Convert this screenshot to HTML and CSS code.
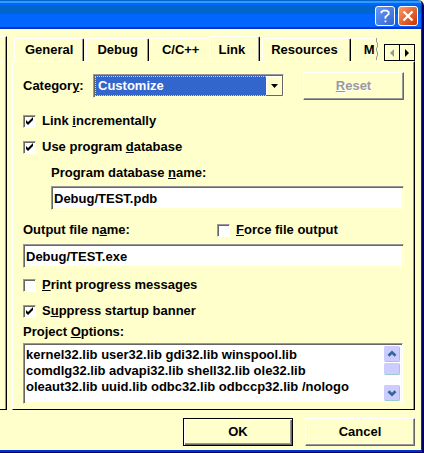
FILE: index.html
```html
<!DOCTYPE html>
<html lang="en">
<head>
<meta charset="utf-8">
<title>Project Settings</title>
<link rel="stylesheet" href="styles.css">
</head>
<body>
<div class="window">
  <header class="titlebar">
    <button class="caption help" type="button" aria-label="Help">
      <svg width="20" height="20" viewBox="0 0 20 20"><path d="M6 7V5.500L8 4h4l2 1.500V8l-3.500 3v2M10.500 15v2" fill="none" stroke="#fff" stroke-width="2"/></svg>
    </button>
    <button class="caption close" type="button" aria-label="Close">
      <svg width="20" height="20" viewBox="0 0 20 20"><path d="M5 5l10 10M15 5L5 15" fill="none" stroke="#fff" stroke-width="2.500"/></svg>
    </button>
  </header>
  <div class="content">
    <div class="side"><div class="side-inner"></div></div>
    <main class="sheet">
      <div class="tabstrip">
        <div class="tabs" role="tablist">
          <button class="tab" type="button" role="tab">General</button>
          <button class="tab" type="button" role="tab">Debug</button>
          <button class="tab last" type="button" role="tab">C/C++</button>
          <button class="tab active" type="button" role="tab" aria-selected="true">Link</button>
          <button class="tab after" type="button" role="tab">Resources</button>
          <button class="tab cut" type="button" role="tab">M</button>
          <svg class="tear" width="5" height="24" viewBox="0 0 5 24"><path d="M1.500 1v4l1 1v4l-1 1v3l1 1v4l-1 1v3" fill="none" stroke="#999"/></svg>
        </div>
        <div class="spinner">
          <button type="button" aria-label="Scroll tabs left"><svg width="14" height="14" viewBox="0 0 14 14"><path d="M9 3v8L5 7z" fill="#999"/></svg></button>
          <button type="button" aria-label="Scroll tabs right"><svg width="14" height="14" viewBox="0 0 14 14"><path d="M5 3v8l4-4z" fill="#000"/></svg></button>
        </div>
      </div>
      <form class="page">
        <div class="row category">
          <label for="category">Categor<u>y</u>:</label>
          <div class="combo">
            <select id="category"><option>Customize</option></select>
            <svg class="drop" width="17" height="20" viewBox="0 0 17 20"><path d="M0 0h17v20H0z" fill="#ffc"/><path d="M.5 20V.5H17" fill="none" stroke="#fff"/><path d="M16.500 0v19.500H0" fill="none" stroke="#666"/><path d="M5 8h7L8.500 12z" fill="#000"/></svg>
          </div>
          <button class="button reset" type="button" disabled><u>R</u>eset</button>
        </div>
        <div class="checks">
          <label class="check"><input type="checkbox" checked><span>Link <u>i</u>ncrementally</span></label>
          <label class="check"><input type="checkbox" checked><span>Use program <u>d</u>atabase</span></label>
        </div>
        <div class="indent">
          <label class="caption-row" for="pdb">Program database <u>n</u>ame:</label>
          <input class="field" id="pdb" type="text" value="Debug/TEST.pdb">
        </div>
        <div class="row output">
          <label for="exe">Output file n<u>a</u>me:</label>
          <label class="check force"><input type="checkbox"><span><u>F</u>orce file output</span></label>
        </div>
        <input class="field" id="exe" type="text" value="Debug/TEST.exe">
        <div class="checks lower">
          <label class="check"><input type="checkbox"><span><u>P</u>rint progress messages</span></label>
          <label class="check"><input type="checkbox" checked><span>S<u>u</u>ppress startup banner</span></label>
        </div>
        <label class="options-label" for="options">Project <u>O</u>ptions:</label>
        <div class="memo">
          <textarea id="options" spellcheck="false">kernel32.lib user32.lib gdi32.lib winspool.lib
comdlg32.lib advapi32.lib shell32.lib ole32.lib
oleaut32.lib uuid.lib odbc32.lib odbccp32.lib /nologo</textarea>
          <div class="scrollbar">
            <button type="button" aria-label="Scroll up"><svg width="16" height="16" viewBox="0 0 16 16"><path d="M4 10l4-4 4 4" fill="none" stroke="#369" stroke-width="3"/></svg></button>
            <div class="thumb"></div>
            <button class="down" type="button" aria-label="Scroll down"><svg width="16" height="16" viewBox="0 0 16 16"><path d="M4 6l4 4 4-4" fill="none" stroke="#369" stroke-width="3"/></svg></button>
          </div>
        </div>
      </form>
    </main>
  </div>
  <footer class="actions">
    <button class="button default" type="button">OK</button>
    <button class="button" type="button">Cancel</button>
  </footer>
</div>
</body>
</html>
```
FILE: styles.css
```css
* { box-sizing: border-box; }

body {
  margin: 0;
  background: #ffc;
}

body, button, input, select, textarea {
  font: bold 13px/16px "Liberation Sans", Arial, sans-serif;
  color: #000;
}

button { padding: 0; }
svg { display: block; }

.window {
  display: flex;
  flex-direction: column;
  min-height: 100vh;
  padding: 0 1px 2px 0;
  background: #ffc;
  border-right: 2px solid #006;
  border-bottom: 1px solid #006;
  border-top-right-radius: 6px;
  box-shadow: inset -1px -2px #03c;
}

.titlebar {
  display: flex;
  justify-content: flex-end;
  align-items: center;
  gap: 3px;
  height: 29px;
  padding: 2px 3px 0 0;
  background: linear-gradient(#06c 0 1px, #39f 1px 3px, #06f 3px 5px, #06c 5px 14px, #06f 14px 27px, #03c 27px);
  border-top-right-radius: 4px;
}

.caption {
  width: 20px;
  height: 20px;
  border: 1px solid #fff;
  border-radius: 3px;
  display: flex;
  align-items: center;
  justify-content: center;
}

.help { background: linear-gradient(135deg, #69f, #36c); }
.close { background: linear-gradient(135deg, #f96, #c30); }

.content {
  flex: 1;
  display: flex;
  padding-top: 7px;
}

.side {
  width: 7px;
  margin-right: 5px;
  padding-top: 25px;
  border-top: 1px solid #fff;
  border-right: 1px solid #000;
  border-bottom: 1px solid #000;
  box-shadow: inset -1px 0 #999;
}

.side-inner {
  width: 2px;
  height: 100%;
  border-top: 1px solid #fff;
  border-right: 1px solid #fff;
}

.sheet {
  flex: 1;
  min-width: 0;
  margin-right: 6px;
  display: flex;
  flex-direction: column;
}

.tabstrip {
  display: flex;
  justify-content: space-between;
  align-items: flex-end;
  height: 25px;
}

.tabs {
  display: flex;
  align-items: flex-end;
  padding-left: 2px;
}

.tab {
  height: 23px;
  margin-right: 2px;
  padding: 0 10px;
  background: none;
  border: 0;
  border-top: 1px solid #fff;
  border-left: 1px solid #fff;
  border-right: 1px solid #000;
  border-radius: 2px 2px 0 0;
  box-shadow: inset -1px 0 #999;
}

.tab.last {
  margin-right: 0;
  border-right: 0;
  box-shadow: none;
}

.tab.active {
  height: 26px;
  margin-bottom: -1px;
  padding: 0 14px 0 8px;
  background: #ffc;
}

.tab.after { padding: 0 12px 0 8px; }

.tab.cut {
  margin-right: 0;
  padding-right: 0;
  border-right: 0;
  box-shadow: none;
}

.spinner {
  display: flex;
  height: 17px;
  border: 1px solid #000;
}

.spinner button {
  width: 14px;
  height: 15px;
  border: 0;
  background: #ffc;
  box-shadow: inset 1px 1px #fff;
}

.spinner button + button {
  width: 15px;
  border-left: 1px solid #000;
}

.page {
  flex: 1;
  padding: 10px 10px 5px;
  border: 1px solid;
  border-color: #fff #000 #000 #fff;
  box-shadow: inset -1px 0 #999;
}

.row {
  display: flex;
  align-items: center;
}

.category { gap: 4px; }
.category label { min-width: 66px; }

.combo {
  position: relative;
  flex: 1;
  max-width: 191px;
  height: 24px;
  padding: 1px;
  border: 1px solid;
  border-color: #999 #fff #fff #999;
  box-shadow: inset 1px 1px #666;
  background: #ffc;
}

.combo select {
  appearance: none;
  width: 100%;
  height: 20px;
  padding: 0 20px 0 2px;
  border: 1px dotted #fc6;
  border-radius: 0;
  background: #36c;
  color: #fff;
}

.drop {
  position: absolute;
  top: 1px;
  right: 0;
  pointer-events: none;
}

.button {
  width: 110px;
  height: 28px;
  border: 1px solid;
  border-color: #fff #666 #666 #fff;
  background: #ffc;
  box-shadow: inset -1px -1px #999;
}

.reset {
  width: 101px;
  margin-left: auto;
  color: #999;
  text-shadow: 1px 1px #fff;
}

.default {
  border-color: #000;
  box-shadow: inset 1px 1px #fff, inset -1px -1px #666, inset -2px -2px #999;
}

.checks { padding-top: 8px; }
.lower { padding-top: 4px; }

.check {
  display: flex;
  align-items: center;
  gap: 6px;
  height: 26px;
}

.check input {
  appearance: none;
  width: 13px;
  height: 13px;
  margin: 0;
  border: 1px solid;
  border-color: #999 #fff #fff #999;
  background: #fff;
  box-shadow: inset 1px 1px #666;
}

.check input:checked {
  background: #fff url("data:image/svg+xml,%3Csvg xmlns='http://www.w3.org/2000/svg' viewBox='0 0 11 11'%3E%3Cpath d='M2 4v3l2 2 5-5V1L4 6z'/%3E%3C/svg%3E") center / 11px 11px;
}

.indent { padding-left: 28px; }

.caption-row {
  display: flex;
  height: 26px;
  align-items: center;
  white-space: pre;
}

.field {
  display: block;
  width: 100%;
  height: 24px;
  padding: 0 2px;
  border: 1px solid;
  border-color: #999 #fff #fff #999;
  border-radius: 0;
  background: #fff;
  box-shadow: inset 1px 1px #666, inset -1px -1px #ffc;
}

.output {
  height: 28px;
  margin-top: 6px;
}

.output > label:first-child { width: 194px; }

.options-label { display: block; }

.memo {
  display: flex;
  height: 61px;
  margin: 3px 1px 0 0;
  padding: 2px;
  border: 1px solid;
  border-color: #999 #fff #fff #999;
  background: #fff;
  box-shadow: inset 1px 1px #666, inset -1px -1px #ffc;
}

.memo textarea {
  flex: 1;
  min-width: 0;
  padding: 1px 0 0;
  border: 0;
  outline: 0;
  resize: none;
  overflow: hidden;
  background: none;
}

.scrollbar {
  display: flex;
  flex-direction: column;
  width: 16px;
  background: #fff;
}

.scrollbar button, .thumb {
  width: 16px;
  height: 16px;
  border: 1px solid;
  border-color: #ccf #9cc #9cc #ccf;
  border-radius: 2px;
  background: #ccf;
  display: flex;
  align-items: center;
  justify-content: center;
}

.scrollbar .thumb {
  height: 12px;
  margin-top: 1px;
}

.scrollbar .down { margin-top: auto; }

.actions {
  display: flex;
  justify-content: flex-end;
  gap: 12px;
  padding: 8px 6px 4px;
}
```
